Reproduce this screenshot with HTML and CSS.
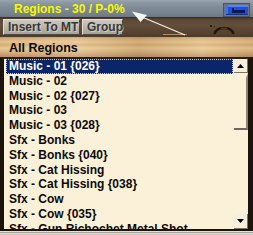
FILE: index.html
```html
<!DOCTYPE html>
<html>
<head>
<meta charset="utf-8">
<link rel="stylesheet" href="styles.css">
</head>
<body>
<div class="panel">
  <div class="titlebar">
    <span class="title">Regions - 30 / P-0%</span>
    <div class="minbtn">
      <svg width="27" height="14" viewBox="0 0 27 14">
        <rect x="0" y="0" width="27" height="14" fill="#4c5564"/>
        <rect x="1" y="1" width="25" height="12" fill="#6a7484"/>
        <rect x="3" y="2" width="22" height="10" fill="#1f4fe0"/>
        <rect x="3" y="2" width="22" height="2" fill="#4f82ff"/>
        <rect x="3" y="2" width="2" height="10" fill="#3f6ff5"/>
        <rect x="3" y="11" width="22" height="1" fill="#12308c"/>
        <rect x="10" y="7" width="12" height="3" fill="#0a1a4c"/>
        <rect x="9" y="5" width="2" height="5" fill="#0a1a4c"/>
      </svg>
    </div>
  </div>
  <div class="toolbar">
    <button class="tbtn insert">Insert To MT</button>
    <button class="tbtn group">Group</button>
    <svg class="smile" width="28" height="10" viewBox="0 0 28 10">
      <rect x="0" y="0" width="2" height="2" fill="#2a1e14"/>
      <rect x="4" y="1" width="1" height="1" fill="#2a1e14"/>
      <path d="M4.5 9 Q6 3 14 3 Q22 3 23.5 9" fill="none" stroke="#22180f" stroke-width="2.4"/>
      <path d="M11 3.2 L17 3.2" stroke="#5a4634" stroke-width="1"/>
    </svg>
  </div>
  <div class="sand"><span class="label">All Regions</span></div>
  <div class="list">
    <div class="items">
      <div class="item sel">Music - 01 {026}</div>
      <div class="item">Music - 02</div>
      <div class="item">Music - 02 {027}</div>
      <div class="item">Music - 03</div>
      <div class="item">Music - 03 {028}</div>
      <div class="item">Sfx - Bonks</div>
      <div class="item">Sfx - Bonks {040}</div>
      <div class="item">Sfx - Cat Hissing</div>
      <div class="item">Sfx - Cat Hissing {038}</div>
      <div class="item">Sfx - Cow</div>
      <div class="item">Sfx - Cow {035}</div>
      <div class="item">Sfx - Gun Richochet Metal Shot</div>
    </div>
    <div class="scroll">
      <div class="sbtn up">
        <svg width="7" height="4" viewBox="0 0 7 4"><polygon points="0,4 3.5,0 7,4" fill="#000"/></svg>
      </div>
      <div class="thumb"></div>
      <div class="track"></div>
      <div class="sbtn down">
        <svg width="7" height="4" viewBox="0 0 7 4"><polygon points="0,0 7,0 3.5,4" fill="#000"/></svg>
      </div>
    </div>
  </div>
  <div class="footer"></div>
  <svg class="arrow" width="253" height="40" viewBox="0 0 253 40">
    <line x1="163" y1="34.5" x2="187" y2="34.5" stroke="#b08a60" stroke-width="1"/>
    <line x1="142" y1="17" x2="185" y2="35" stroke="#f4f0e8" stroke-width="1.2"/>
    <polygon points="132,11.5 147,15 140.5,22" fill="#f8f6f0"/>
  </svg>
</div>
</body>
</html>
```
FILE: styles.css
```css
html, body {
  margin: 0;
  padding: 0;
}
body {
  width: 253px;
  height: 235px;
  overflow: hidden;
  background: #d0ccc4;
  font-family: "Liberation Sans", Arial, sans-serif;
}
.panel {
  position: relative;
  width: 253px;
  height: 235px;
  display: flex;
  flex-direction: column;
}
.titlebar {
  height: 17px;
  border-bottom: 1px solid #3a3026;
  display: flex;
  align-items: flex-start;
  background: linear-gradient(to bottom, #9aa5ae 0, #8b97a2 3px, #808c97 7px, #7a8692 11px, #74808c 14px, #6c7783 17px);
}
.title {
  padding: 1px 0 0 14px;
  font-weight: bold;
  font-size: 12px;
  line-height: 16px;
  color: #f8f800;
  white-space: nowrap;
}
.minbtn {
  margin: 3px 3px 0 auto;
  width: 27px;
  height: 14px;
  display: flex;
}
.toolbar {
  height: 19px;
  display: flex;
  align-items: flex-start;
  padding-left: 3px;
  box-sizing: border-box;
  background: linear-gradient(to bottom, #4a3a2b 0, #5c4835 2px, #624e3a 7px, #5a4633 12px, #54412f 16px, #4c3a29 19px);
}
.tbtn {
  margin: 1px 0 0 0;
  height: 16px;
  padding: 0;
  box-sizing: border-box;
  font-family: "Liberation Sans", Arial, sans-serif;
  font-weight: bold;
  font-size: 12px;
  line-height: 14px;
  color: #3a3834;
  text-shadow: 1px 1px 0 rgba(235, 232, 224, 0.55);
  background: linear-gradient(to bottom, #cdc9c1 0, #bab6ae 50%, #a6a29a 100%);
  border: 1px solid;
  border-color: #e2dfd8 #4c4842 #4c4842 #e2dfd8;
  text-align: left;
}
.insert {
  width: 77px;
  padding-left: 4px;
}
.group {
  width: 41px;
  margin-left: 2px;
  padding-left: 4px;
}
.smile {
  margin: 7px 15px 0 auto;
}
.sand {
  height: 20px;
  box-sizing: border-box;
  padding: 1px 0 0 9px;
  background:
    linear-gradient(to right, rgba(255,240,200,0) 0, rgba(255,240,200,0.25) 30%, rgba(120,80,40,0.15) 55%, rgba(255,240,200,0.2) 80%, rgba(120,80,40,0.1) 100%),
    linear-gradient(to bottom, #c09668 0, #d6ae7a 2px, #e4c08a 5px, #d4ac76 8px, #e8c894 11px, #dcb682 14px, #c9a172 17px, #b88f60 20px);
}
.label {
  font-weight: bold;
  font-size: 12.5px;
  line-height: 19px;
  color: #0a0806;
}
.list {
  height: 174px;
  box-sizing: border-box;
  border-top: 2px solid #2a2016;
  border-bottom: 2px solid #1c140c;
  border-left: 4px solid #1c140c;
  border-right: 5px solid #1c140c;
  background: #fbf1d9;
  display: flex;
}
.items {
  flex: 1;
  padding-left: 2px;
  overflow: hidden;
}
.item {
  height: 14.8px;
  line-height: 14.8px;
  padding-left: 3px;
  font-weight: bold;
  font-size: 12px;
  color: #0c0a08;
  white-space: nowrap;
}
.item.sel {
  background: #0b2569;
  color: #ffffff;
  outline: 1px dotted #e0cf98;
  outline-offset: -1px;
}
.scroll {
  width: 15px;
  display: flex;
  flex-direction: column;
  padding-left: 1px;
  box-sizing: border-box;
}
.sbtn {
  height: 15px;
  box-sizing: border-box;
  background: #f7efdc;
  border-right: 1px solid #7a7266;
  border-bottom: 1px solid #7a7266;
  display: flex;
  align-items: center;
  justify-content: center;
}
.up {
  height: 14px;
}
.thumb {
  height: 57px;
  box-sizing: border-box;
  border-right: 2px solid #8a8274;
  border-bottom: 2px solid #6e665a;
  border-top: 5px solid #fbf1d9;
}
.track {
  flex: 1;
}
.footer {
  flex: 1;
  background: linear-gradient(to bottom, #e4e1da 0, #e4e1da 1px, #a8a49c 1px, #a8a49c 2px, #d4d0c8 2px);
}
.arrow {
  position: absolute;
  left: 0;
  top: 0;
  pointer-events: none;
}
```
